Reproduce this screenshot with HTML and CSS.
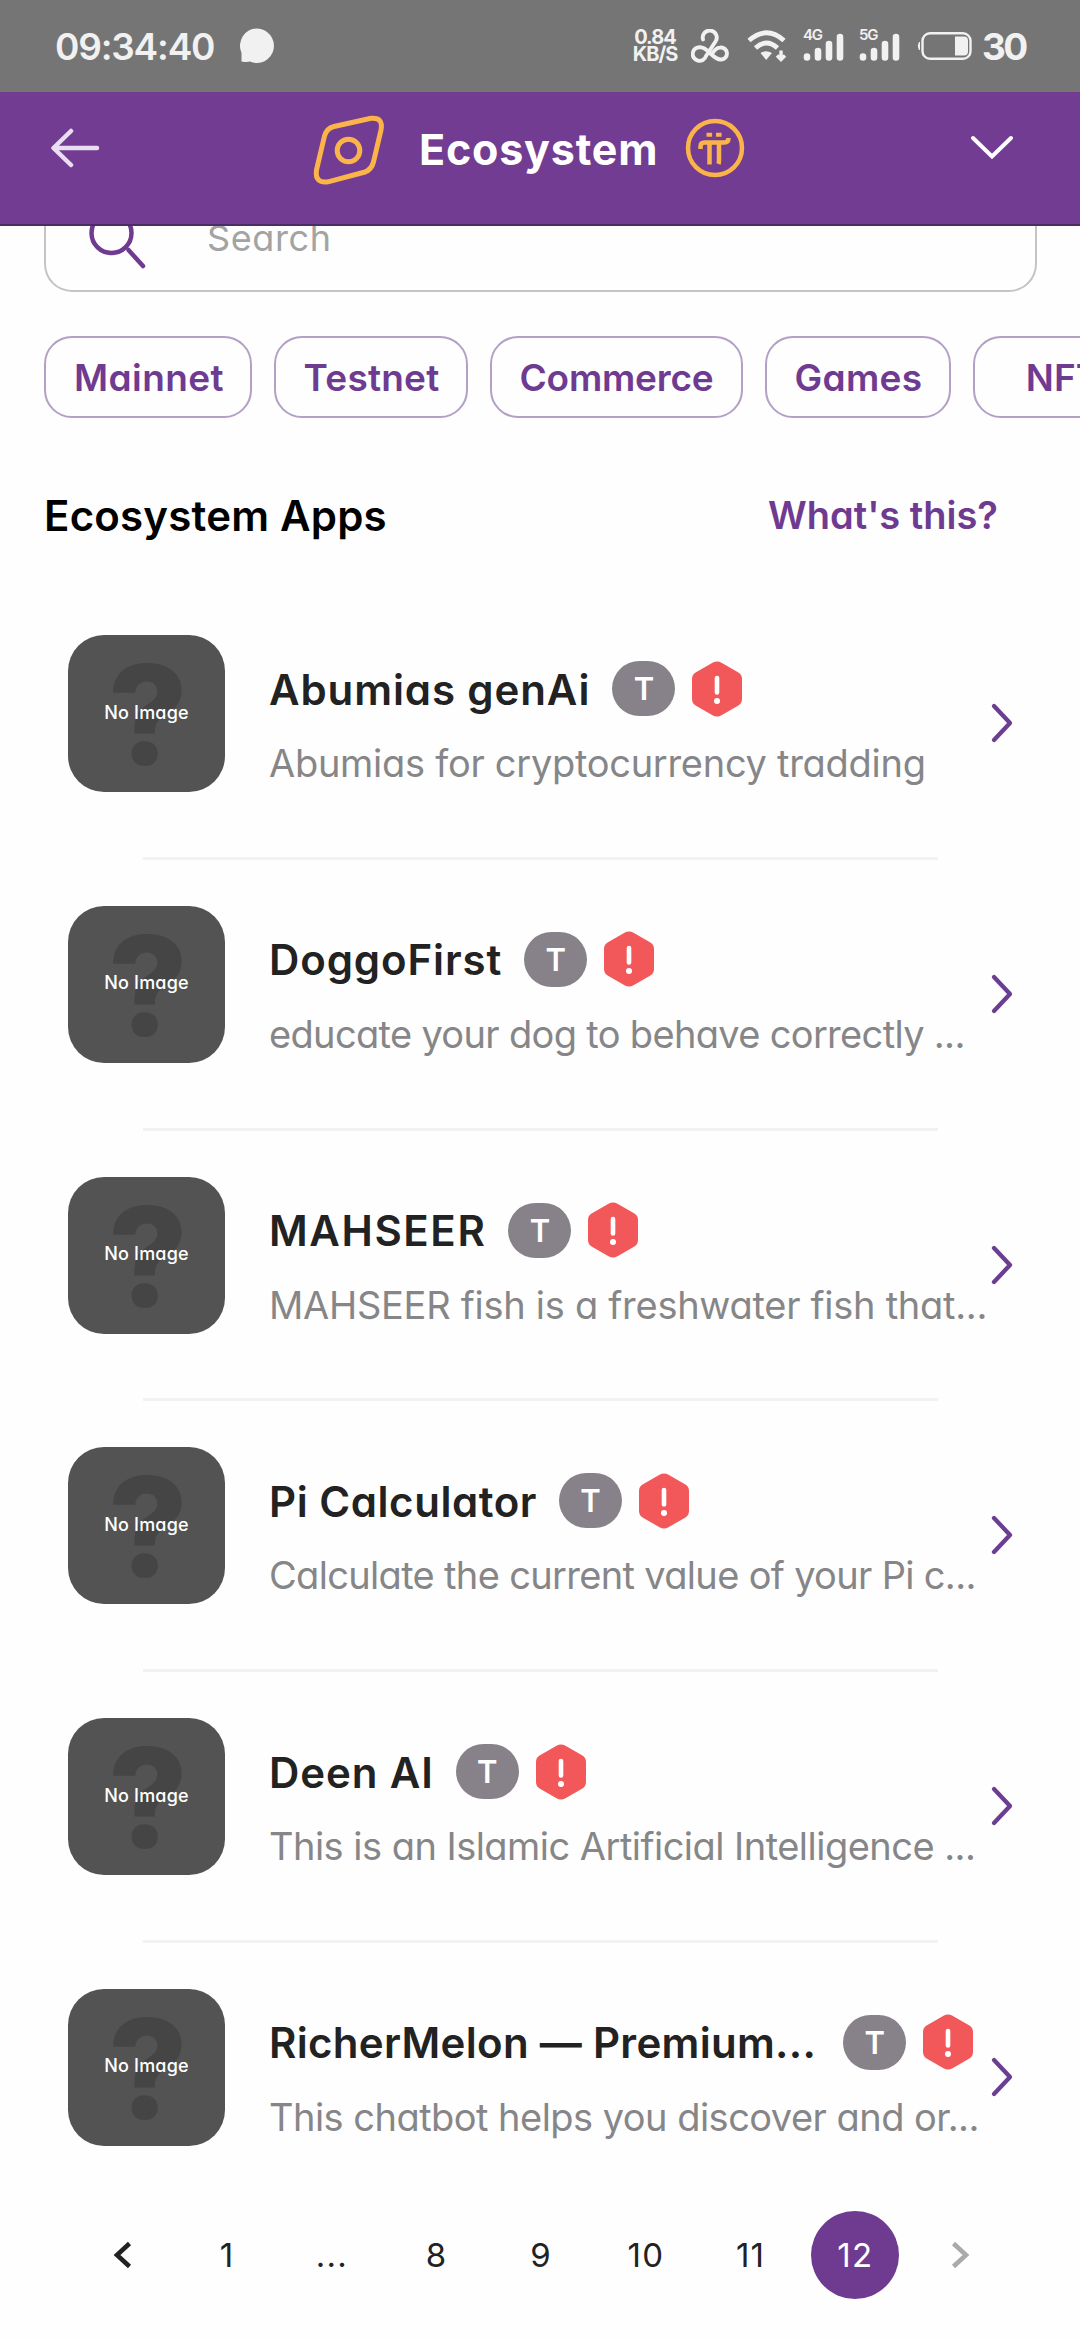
FILE: index.html
```html
<!DOCTYPE html>
<html lang="en">
<head>
<meta charset="utf-8">
<title>Ecosystem</title>
<link rel="stylesheet" href="styles.css">
</head>
<body>
<svg class="defs" aria-hidden="true">
  <symbol id="hex" viewBox="0 0 50 56">
    <path d="M20.500 1.800Q25 -1 29.500 1.800L46 11.300Q50 13.500 50 18V38Q50 42.500 46 44.700L29.500 54.200Q25 57 20.500 54.200L4 44.700Q0 42.500 0 38V18Q0 13.500 4 11.300Z" fill="#f25859"/>
    <path d="M25 17V31.500" stroke="#fff" stroke-width="4.600" stroke-linecap="round"/>
    <circle cx="25" cy="40" r="3" fill="#fff"/>
  </symbol>
  <symbol id="next" viewBox="0 0 25 42">
    <path d="M4 4L20 21L4 38" fill="none" stroke="#6b3e92" stroke-width="4.300" stroke-linecap="round" stroke-linejoin="round"/>
  </symbol>
  <symbol id="signal" viewBox="0 0 42 34">
    <path d="M4 27.500V28.500M15 22V28.500M26 15V28.500M37 8V28.500" stroke="#f1f1f1" stroke-width="6.600" stroke-linecap="round"/>
  </symbol>
</svg>

<div class="status">
  <span class="clock">09:34:40</span>
  <svg class="bubble" viewBox="0 0 36 36"><path d="M18 0.500A17 17.300 0 1 1 11 33.600Q8 34.500 2.500 33.500V25A17 17.300 0 0 1 18 0.500Z" fill="#f1f1f1"/></svg>
  <div class="speed"><span>0.84</span><span>KB/S</span></div>
  <svg class="knot" viewBox="0 0 38 34"><path d="M12 10.500A7 7 0 1 1 24.500 12.500L15 27A6.800 6.800 0 1 1 9.500 18.300C16.500 18.300 22 30.500 29.500 30.500A6 6 0 1 0 29 18.600C25.500 18.600 24 20.500 22 23.500" fill="none" stroke="#f1f1f1" stroke-width="3.900" stroke-linecap="round"/></svg>
  <svg class="wifi" viewBox="0 0 40 34"><g fill="none" stroke="#f1f1f1" stroke-width="4.800"><path d="M2 11.500Q19.500 -4 37 11.500"/><path d="M8.500 19Q19.500 9 30.500 19"/></g><path d="M13.500 24Q19 20.500 25 24L19.200 31Z" fill="#f1f1f1"/><path d="M34 21.500V29M30 26.500L34 30.500L38 26.500" fill="none" stroke="#f1f1f1" stroke-width="3.400"/></svg>
  <div class="sim"><span>4G</span><svg viewBox="0 0 42 34"><use href="#signal"/></svg></div>
  <div class="sim"><span>5G</span><svg viewBox="0 0 42 34"><use href="#signal"/></svg></div>
  <svg class="battery" viewBox="0 0 56 30"><path d="M2.500 11Q0 15 2.500 19Z" fill="#f1f1f1" stroke="#f1f1f1"/><rect x="5.500" y="2.300" width="48" height="25.400" rx="7.500" fill="none" stroke="#f1f1f1" stroke-width="2.400"/><path d="M38 5.500H47Q51 5.500 51 9.500V20.500Q51 24.500 47 24.500H38Z" fill="#f1f1f1"/></svg>
  <span class="percent">30</span>
</div>

<header class="topbar">
  <svg class="back" viewBox="0 0 50 40"><path d="M4 20H47M21 3L3.500 20L21 37" fill="none" stroke="#eadff2" stroke-width="4.500" stroke-linecap="round" stroke-linejoin="round"/></svg>
  <div class="brand">
    <svg class="logo" viewBox="0 0 100 90"><path d="M34 23.500L71 15.300Q83.500 14 81 27L73.500 59Q71.500 66.500 65 69L28 78.800Q14.500 80.500 16.500 67L24.500 33Q26.500 25.500 34 23.500Z" fill="none" stroke="#fbb44a" stroke-width="5"/><circle cx="48.500" cy="47.500" r="11.300" fill="none" stroke="#fbb44a" stroke-width="5"/></svg>
    <h1>Ecosystem</h1>
    <svg class="coin" viewBox="0 0 60 60"><circle cx="30" cy="30" r="27" fill="none" stroke="#fbb44a" stroke-width="4.500"/><path d="M21.500 14.800h5.600v4h-5.600zM31 14.800h5.600v4h-5.600z" fill="#fbb44a"/><path d="M15.500 31V28.500Q15.500 24.500 19.500 24.500H39.500Q43.500 24.500 43.500 20M24.500 25V46.500M34 25V42Q34 44.500 33.500 46" fill="none" stroke="#fbb44a" stroke-width="4.500"/></svg>
  </div>
  <svg class="expand" viewBox="0 0 44 26"><path d="M3 3L22 21.500L41 3" fill="none" stroke="#fff" stroke-width="4" stroke-linecap="round"/></svg>
</header>

<main>
  <div class="search">
    <svg viewBox="0 0 60 46"><path d="M54 40L39.500 24" stroke="#6f3b91" stroke-width="4.500" stroke-linecap="round"/><circle cx="22.500" cy="7" r="20" fill="none" stroke="#6f3b91" stroke-width="4.500"/></svg>
    <span>Search</span>
  </div>

  <nav class="chips">
    <a class="chip mainnet">Mainnet</a>
    <a class="chip testnet">Testnet</a>
    <a class="chip commerce">Commerce</a>
    <a class="chip games">Games</a>
    <a class="chip nft">NFT</a>
  </nav>

  <div class="heading">
    <h2>Ecosystem Apps</h2>
    <a>What's this?</a>
  </div>

  <ul class="apps">
    <li>
      <div class="thumb"><b>?</b><span>No Image</span></div>
      <div class="info">
        <div class="name"><h3>Abumias genAi</h3><span class="badge">T</span><svg><use href="#hex"/></svg></div>
        <p class="loose">Abumias for cryptocurrency tradding</p>
      </div>
      <svg class="next"><use href="#next"/></svg>
    </li>
    <li>
      <div class="thumb"><b>?</b><span>No Image</span></div>
      <div class="info">
        <div class="name"><h3>DoggoFirst</h3><span class="badge">T</span><svg><use href="#hex"/></svg></div>
        <p class="snug">educate your dog to behave correctly ...</p>
      </div>
      <svg class="next"><use href="#next"/></svg>
    </li>
    <li>
      <div class="thumb"><b>?</b><span>No Image</span></div>
      <div class="info">
        <div class="name"><h3 class="wide">MAHSEER</h3><span class="badge">T</span><svg><use href="#hex"/></svg></div>
        <p class="loose">MAHSEER fish is a freshwater fish that...</p>
      </div>
      <svg class="next"><use href="#next"/></svg>
    </li>
    <li>
      <div class="thumb"><b>?</b><span>No Image</span></div>
      <div class="info">
        <div class="name"><h3 class="mid">Pi Calculator</h3><span class="badge">T</span><svg><use href="#hex"/></svg></div>
        <p class="snug">Calculate the current value of your Pi c...</p>
      </div>
      <svg class="next"><use href="#next"/></svg>
    </li>
    <li>
      <div class="thumb"><b>?</b><span>No Image</span></div>
      <div class="info">
        <div class="name"><h3>Deen AI</h3><span class="badge">T</span><svg><use href="#hex"/></svg></div>
        <p>This is an Islamic Artificial Intelligence ...</p>
      </div>
      <svg class="next"><use href="#next"/></svg>
    </li>
    <li>
      <div class="thumb"><b>?</b><span>No Image</span></div>
      <div class="info">
        <div class="name"><h3 class="long">RicherMelon — Premium...</h3><span class="badge">T</span><svg><use href="#hex"/></svg></div>
        <p>This chatbot helps you discover and or...</p>
      </div>
      <svg class="next"><use href="#next"/></svg>
    </li>
  </ul>

  <nav class="pages">
    <a><svg viewBox="0 0 20 28"><path d="M16.500 2.500L4 14L16.500 25.500" fill="none" stroke="#222" stroke-width="4.600"/></svg></a>
    <a>1</a><a>...</a><a>8</a><a>9</a><a>10</a><a>11</a><a class="current">12</a>
    <a><svg viewBox="0 0 20 28"><path d="M3.500 2.500L16 14L3.500 25.500" fill="none" stroke="#aaa" stroke-width="4.600"/></svg></a>
  </nav>
</main>
</body>
</html>
```
FILE: styles.css
```css
* { box-sizing: border-box; }
body {
  margin: 0;
  width: 1080px;
  height: 2340px;
  overflow: hidden;
  background: #fefefe;
  color: #222;
  font-family: Inter, "Noto Sans", sans-serif;
  font-feature-settings: "cv11";
}
h1, h2, h3, p, ul { margin: 0; padding: 0; }
svg { display: block; flex: none; }
.defs { position: absolute; width: 0; height: 0; }

.status {
  display: flex;
  align-items: center;
  height: 92px;
  padding: 0 0 0 55px;
  background: #757575;
  color: #f1f1f1;
}
.clock { width: 184px; font-size: 37px; font-weight: 600; letter-spacing: -1.2px; white-space: nowrap; }
.bubble { width: 36px; height: 36px; margin-right: 358px; }
.speed {
  display: flex;
  flex-direction: column;
  align-items: center;
  width: 44px;
  font-size: 20px;
  line-height: 17px;
  font-weight: 700;
  letter-spacing: -1px;
}
.knot { width: 38px; height: 34px; margin-left: 14px; }
.wifi { width: 40px; height: 34px; margin-left: 18px; }
.sim { position: relative; width: 42px; height: 34px; margin-left: 16px; }
.sim + .sim { margin-left: 14px; }
.sim svg { width: 42px; height: 34px; }
.sim span { position: absolute; left: 0; top: -2px; font-size: 15px; line-height: 16px; font-weight: 600; letter-spacing: -1.2px; }
.battery { width: 56px; height: 30px; margin-left: 16px; }
.percent { margin-left: 9px; font-size: 37px; font-weight: 700; letter-spacing: -2.6px; }

.topbar {
  display: flex;
  align-items: center;
  height: 134px;
  padding: 0 66px 21px 50px;
  background: #713c91;
  border-bottom: 2px solid #4b2c63;
}
.back { width: 50px; height: 40px; }
.brand { display: flex; align-items: center; margin-left: 200px; }
.logo { width: 100px; height: 90px; margin-right: 19px; }
.topbar h1 { width: 263px; margin-top: 3px; color: #fff; font-size: 43px; line-height: 52px; font-weight: 700; letter-spacing: 0.8px; }
.coin { width: 60px; height: 60px; margin: 0 0 0 3px; }
.expand { width: 44px; height: 26px; margin-left: auto; }

.search {
  display: flex;
  height: 66px;
  margin: 0 43px 44px 44px;
  border: 2px solid #c4c4c4;
  border-top: 0;
  border-radius: 0 0 28px 28px;
  overflow: hidden;
}
.search svg { width: 60px; height: 46px; margin-left: 43px; }
.search span { margin: -11px 0 0 58px; color: #a3a3a3; font-size: 36px; line-height: 46px; letter-spacing: 0.6px; }

.chips { display: flex; gap: 22px; padding-left: 44px; overflow: hidden; }
.chip {
  flex: none;
  height: 82px;
  border: 2px solid #b3a0c4;
  border-radius: 28px;
  color: #6f3b91;
  font-size: 37px;
  line-height: 80px;
  font-weight: 600;
  text-align: center;
}
.mainnet { width: 208px; letter-spacing: 0.4px; padding-left: 2px; }
.testnet { width: 194px; letter-spacing: 0.2px; padding-left: 1px; }
.commerce { width: 253px; letter-spacing: -0.2px; }
.games { width: 186px; letter-spacing: 0.3px; padding-left: 1px; }
.nft { width: 180px; }

.heading {
  display: flex;
  justify-content: space-between;
  align-items: center;
  height: 60px;
  margin: 67px 82px 44px 44px;
}
.heading h2 { color: #000; font-size: 42px; font-weight: 600; letter-spacing: 0.2px; }
.heading a { color: #6f3b91; font-size: 38px; font-weight: 600; }

.apps { list-style: none; }
.apps li {
  display: flex;
  align-items: flex-start;
  height: 270.8px;
  padding: 46px 0 0 68px;
  background: linear-gradient(#f2f2f2, #f2f2f2) no-repeat 143px 100% / 795px 3px;
}
.apps li:last-child { height: 203px; background: none; }
.thumb {
  display: grid;
  place-items: center;
  flex: none;
  width: 157px;
  height: 157px;
  border-radius: 36px;
  background: #535353;
  overflow: hidden;
}
.thumb > * { grid-area: 1 / 1; }
.thumb b { padding: 2px 0 0 3px; color: #454545; font-size: 138px; line-height: 155px; font-weight: 800; }
.thumb span { padding-bottom: 3px; color: #fff; font-size: 18px; font-weight: 500; letter-spacing: 0.2px; z-index: 1; }
.info { width: 721px; margin: 26px 0 0 44px; white-space: nowrap; }
.name { display: flex; align-items: center; height: 55px; }
.name h3 { margin-right: 22px; padding-top: 2px; font-size: 42px; line-height: 52px; font-weight: 600; letter-spacing: 0.9px; }
.name h3.wide { letter-spacing: 1.6px; }
.name h3.mid { letter-spacing: 0.55px; }
.name h3.long { letter-spacing: 0.3px; margin-right: 27px; }
.badge {
  width: 63px;
  height: 55px;
  margin-right: 17px;
  border-radius: 28px;
  background: #87828a;
  color: #fff;
  font-size: 31px;
  line-height: 55px;
  font-weight: 600;
  text-align: center;
}
.name svg { width: 50px; height: 56px; }
.info p { margin-top: 24px; color: #868688; font-size: 38px; line-height: 46px; letter-spacing: -0.53px; }
.info p.snug { letter-spacing: -0.67px; }
.info p.loose { letter-spacing: -0.28px; }
.next { width: 25px; height: 42px; margin: 67px 0 0 0; }

.pages { display: flex; gap: 16.7px; padding: 65px 0 0 78.500px; }
.pages a {
  display: flex;
  align-items: center;
  justify-content: center;
  width: 88px;
  height: 88px;
  border-radius: 50%;
  font-size: 33px;
  letter-spacing: 1.3px;
}
.pages svg { width: 20px; height: 28px; }
.pages .current { background: #6f3b91; color: #fff; }
```
